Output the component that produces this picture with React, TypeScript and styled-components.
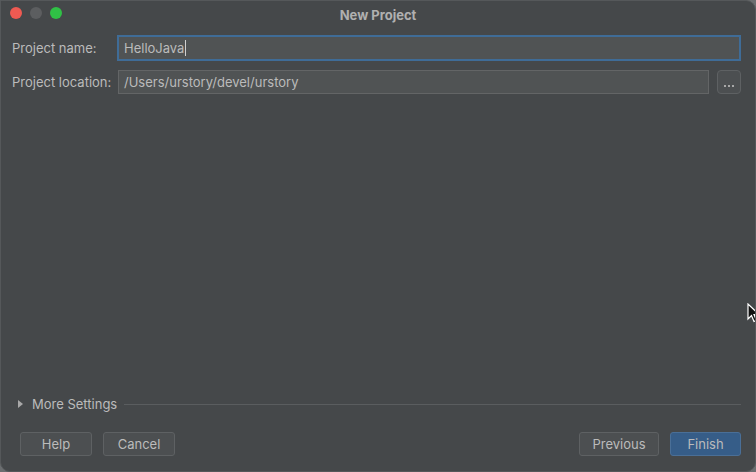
import React from "react";
import styled, { createGlobalStyle } from "styled-components";

const Global = createGlobalStyle`
  html, body { margin: 0; padding: 0; background: #6b6e70; }
  body { font-family: Inter, "Noto Sans", "Liberation Sans", sans-serif; font-size: 13px; color: #bbbbbb; }
  * { box-sizing: border-box; }
`;

const Window = styled.div`
  position: relative;
  width: 756px;
  height: 472px;
  background: #45484a;
  border: 1px solid #55585a;
  border-radius: 0 10px 10px 10px;
  display: flex;
  flex-direction: column;
  overflow: hidden;
`;

const TitleBar = styled.div`
  height: 27px;
  display: flex;
  align-items: center;
  position: relative;
  flex-shrink: 0;
`;

const Lights = styled.div`
  display: flex;
  gap: 8px;
  padding-left: 9px;
  position: absolute;
  left: 0;
  top: 6px;
`;

const Light = styled.span<{ $c: string }>`
  width: 12px;
  height: 12px;
  border-radius: 50%;
  background: ${(p) => p.$c};
`;

const Title = styled.div`
  flex: 1;
  text-align: center;
  font-weight: 700;
  font-size: 13px;
  color: #b0b0b0;
`;

const Body = styled.div`
  flex: 1;
  display: flex;
  flex-direction: column;
  padding: 7px 14px 15px 11px;
`;

const Form = styled.div`
  display: grid;
  grid-template-columns: 106px 1fr;
  row-gap: 9px;
  align-items: center;
`;

const Label = styled.label`
  font-size: 13px;
  color: #bbbbbb;
`;

const Field = styled.div<{ $focused?: boolean }>`
  height: ${(p) => (p.$focused ? 26 : 24)}px;
  margin: ${(p) => (p.$focused ? "0 0 0 -1px" : "0")};
  background: #505354;
  border: ${(p) => (p.$focused ? "2px solid #3f6c97" : "1px solid #636566")};
  display: flex;
  align-items: center;
  padding-left: 5px;
  color: #bbbbbb;
  font-size: 13px;
`;

const Caret = styled.span`
  display: inline-block;
  width: 1px;
  height: 16px;
  background: #d0d0d0;
  margin-left: 1px;
`;

const LocRow = styled.div`
  display: flex;
  gap: 8px;
  align-items: center;
`;

const LocField = styled(Field)`
  flex: 1;
`;

const Browse = styled.div`
  width: 24px;
  height: 24px;
  border: 1px solid #5e6163;
  border-radius: 4px;
  background: #4c4f51;
  display: flex;
  align-items: flex-end;
  justify-content: center;
  padding-bottom: 6px;
  gap: 2px;
`;

const Dot = styled.span`
  width: 2px;
  height: 2px;
  background: #a8a8a8;
`;

const Spacer = styled.div`
  flex: 1;
`;

const More = styled.div`
  display: flex;
  align-items: center;
  padding-left: 6px;
  margin-bottom: 20px;
  height: 16px;
`;

const Tri = styled.span`
  width: 0;
  height: 0;
  border-top: 4px solid transparent;
  border-bottom: 4px solid transparent;
  border-left: 5px solid #a8a8a8;
  margin-right: 9px;
`;

const MoreText = styled.span`
  color: #bbbbbb;
  font-size: 13px;
  margin-right: 7px;
`;

const Rule = styled.div`
  flex: 1;
  height: 1px;
  background: #5a5d5f;
`;

const Footer = styled.div`
  display: flex;
  align-items: center;
  padding-left: 8px;
  gap: 11px;
`;

const Btn = styled.button<{ $w: number; $primary?: boolean }>`
  width: ${(p) => p.$w}px;
  height: 24px;
  border-radius: 3px;
  border: 1px solid ${(p) => (p.$primary ? "#4a6f97" : "#5e6163")};
  background: ${(p) => (p.$primary ? "#365d88" : "#4c4f51")};
  color: #bbbbbb;
  font-family: inherit;
  font-size: 13px;
  padding: 0;
`;

const Cursor = styled.svg`
  position: absolute;
  left: 746px;
  top: 302px;
`;

export default function App() {
  return (
    <>
      <Global />
      <Window>
        <TitleBar>
          <Lights>
            <Light $c="#ee5a52" />
            <Light $c="#5c5e60" />
            <Light $c="#30c146" />
          </Lights>
          <Title>New Project</Title>
        </TitleBar>
        <Body>
          <Form>
            <Label>Project name:</Label>
            <Field $focused>
              HelloJava
              <Caret />
            </Field>
            <Label>Project location:</Label>
            <LocRow>
              <LocField>/Users/urstory/devel/urstory</LocField>
              <Browse>
                <Dot />
                <Dot />
                <Dot />
              </Browse>
            </LocRow>
          </Form>
          <Spacer />
          <More>
            <Tri />
            <MoreText>More Settings</MoreText>
            <Rule />
          </More>
          <Footer>
            <Btn $w={72}>Help</Btn>
            <Btn $w={72}>Cancel</Btn>
            <Spacer />
            <Btn $w={80}>Previous</Btn>
            <Btn $w={71} $primary>
              Finish
            </Btn>
          </Footer>
        </Body>
        <Cursor width="14" height="20" viewBox="0 0 14 20">
          <path d="M1 1 L1 16 L4.5 12.5 L7 18.5 L9.5 17.5 L7 11.5 L12 11.5 Z" fill="#111" stroke="#fff" strokeWidth="1.2" />
        </Cursor>
      </Window>
    </>
  );
}
